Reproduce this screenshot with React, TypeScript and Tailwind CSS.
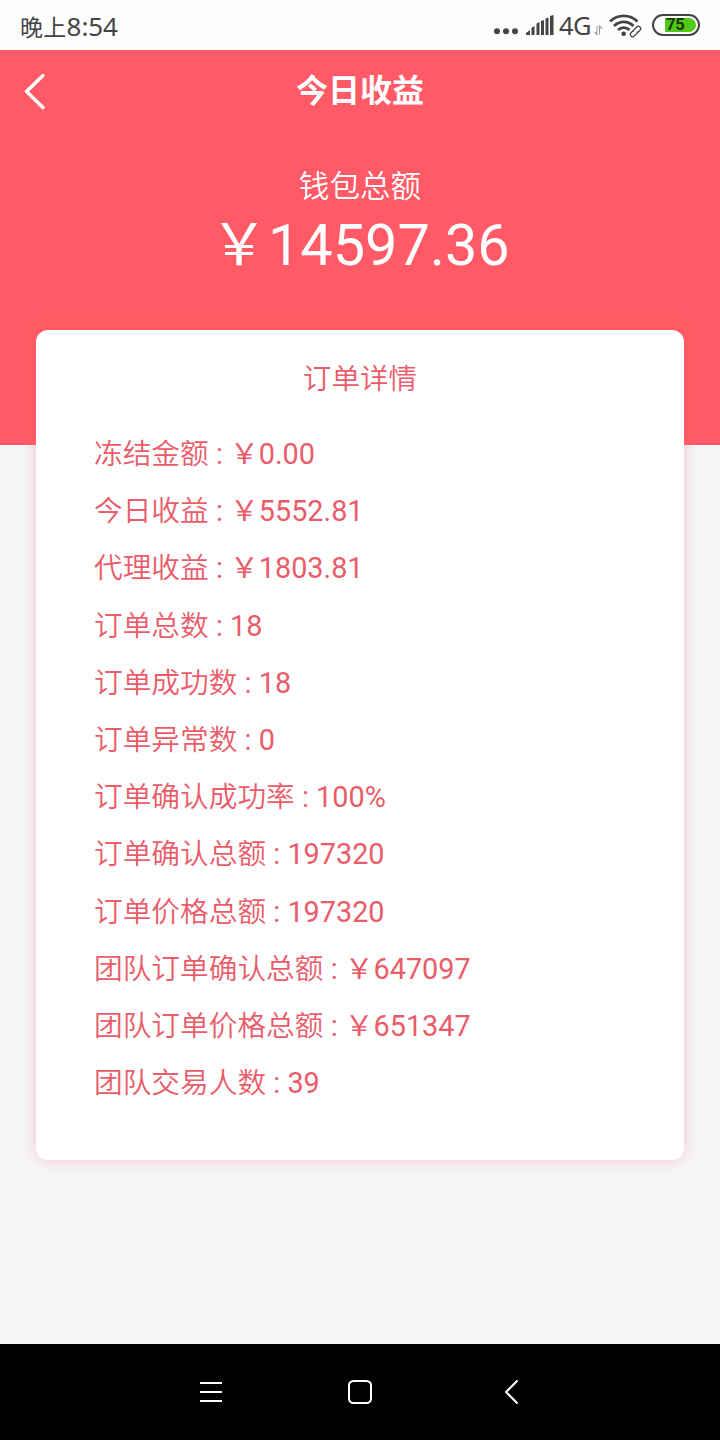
import React from 'react';

interface DetailRow {
    label: string;
    value: string;
}

const rows: DetailRow[] = [
    { label: '冻结金额', value: '\uFFE50.00' },
    { label: '今日收益', value: '\uFFE55552.81' },
    { label: '代理收益', value: '\uFFE51803.81' },
    { label: '订单总数', value: '18' },
    { label: '订单成功数', value: '18' },
    { label: '订单异常数', value: '0' },
    { label: '订单确认成功率', value: '100%' },
    { label: '订单确认总额', value: '197320' },
    { label: '订单价格总额', value: '197320' },
    { label: '团队订单确认总额', value: '\uFFE5647097' },
    { label: '团队订单价格总额', value: '\uFFE5651347' },
    { label: '团队交易人数', value: '39' },
];

const StatusBar: React.FC = () => (
    <div className="flex h-[50px] items-center justify-between bg-[#fefefe] pl-5 pr-5 text-[#444]">
        <span className="pt-[2px] font-['Noto_Sans','Noto_Sans_CJK_SC',sans-serif] text-[26px] leading-none tracking-[-0.1px] whitespace-nowrap">
            <span className="text-[23px] tracking-[0.3px]">晚上</span>8:54
        </span>
        <div className="flex items-center">
            <svg width="25" height="30" viewBox="0 0 25 30" fill="currentColor">
                <circle cx="3" cy="21.300" r="3" />
                <circle cx="12" cy="21.300" r="3" />
                <circle cx="21" cy="21.300" r="3" />
            </svg>
            <svg className="ml-[7px]" width="28" height="30" viewBox="0 0 28 30" fill="currentColor">
                <path d="M0 25v-2l4-3v5zM5.500 25v-7l3-2v9zM10.500 25V13.500l3-1.500v13zM15 25V11l3-1v15zM19.500 25V8.500l3-1V25zM24 25V6l3.500-1v20z" />
            </svg>
            <span className="ml-[5px] w-[33px] pt-[2px] font-['Noto_Sans',sans-serif] text-[25.500px] leading-none tracking-[-0.5px]">4G</span>
            <svg className="ml-[2px]" width="9" height="30" viewBox="0 0 9 30" fill="none" stroke="#999" strokeWidth="1.100">
                <path d="M3 16v8.500l-2.500-2.500M5.500 24.500v-8.500l2.500 2.500" />
            </svg>
            <svg className="ml-[6px]" width="33" height="30" viewBox="0 0 33 30" fill="none" stroke="currentColor" strokeWidth="2.700">
                <path d="M1 11.500C8.500 4 21 4 28.500 11.500M5 16c5.500-5.600 14-5.600 19.500 0M9 20c3.300-3.200 8.200-3.200 11.500 0" />
                <circle cx="14.700" cy="23.800" r="2.300" fill="currentColor" stroke="none" />
                <g strokeWidth="1.200" transform="rotate(-45 26.500 21.500)">
                    <path d="M26 19.200h-3.500a2.300 2.300 0 0 0 0 4.600h3.500a2.300 2.300 0 0 0 2-1" />
                    <path d="M27 23.800h3.500a2.300 2.300 0 0 0 0-4.600h-3.500a2.300 2.300 0 0 0-2 1" />
                </g>
            </svg>
            <div className="mb-px ml-[10px] flex h-[22px] w-[48px] items-center rounded-full border-2 border-[#444] pl-[11px] pr-[2px]">
                <div className="flex h-[14px] w-full items-center rounded-r-full bg-[#50c814] pt-[2px] pl-[1px] font-['Roboto',sans-serif] text-[16.500px] leading-none font-bold tracking-[-0.3px] text-[#18380c]">
                    75
                </div>
            </div>
        </div>
    </div>
);

const NavBar: React.FC = () => (
    <nav className="flex h-24 items-center justify-between bg-black pr-[196px] pl-[196px] text-white">
        <svg width="30" height="30" viewBox="0 0 30 30" fill="none" stroke="currentColor" strokeWidth="2">
            <path d="M4 6h22M4 15h22M4 24h22" />
        </svg>
        <svg width="30" height="30" viewBox="0 0 30 30" fill="none" stroke="currentColor" strokeWidth="2">
            <rect x="4" y="4" width="22" height="22" rx="4.500" />
        </svg>
        <svg width="30" height="30" viewBox="0 0 30 30" fill="none" stroke="currentColor" strokeWidth="2">
            <path d="M23.500 3.500L12 15l11.500 11.500" />
        </svg>
    </nav>
);

export default function App() {
    return (
        <div className="flex h-[1440px] w-[720px] flex-col overflow-hidden bg-[#f5f5f7] font-['Roboto','Noto_Sans_CJK_SC',sans-serif]">
            <StatusBar />
            <header className="h-[395px] shrink-0 bg-[#ff5a65] text-center text-white">
                <div className="grid h-20 grid-cols-[72px_1fr_72px] items-center">
                    <button className="pl-[22px]">
                        <svg width="26" height="40" viewBox="0 0 26 40" fill="none" stroke="currentColor" strokeWidth="3.500" strokeLinecap="round" strokeLinejoin="round">
                            <path d="M21 5.500L4.500 21.500L21 37.500" />
                        </svg>
                    </button>
                    <h1 className="pt-px text-[32px] leading-none font-bold">今日收益</h1>
                </div>
                <p className="mt-[34px] text-[30.600px] leading-[46px] font-[350]">钱包总额</p>
                <p className="text-[57.600px] leading-[72px]">{'\uFFE5'}14597.36</p>
            </header>
            <main className="flex-1">
                <section className="mx-9 -mt-[115px] h-[830px] rounded-[12px] bg-white pt-[21px] text-[28.800px] text-[#ea5c69] shadow-[0_0_14px_rgba(255,90,101,0.3)]">
                    <h2 className="text-center text-[28.600px] leading-[57px] font-[350]">订单详情</h2>
                    <ul className="mt-[18px] pl-[58px]">
                        {rows.map((row) => (
                            <li key={row.label} className="h-[57.200px] leading-[57.200px]">
                                <span className="text-[28.700px] font-[350]">{row.label}</span> : {row.value}
                            </li>
                        ))}
                    </ul>
                </section>
            </main>
            <NavBar />
        </div>
    );
}
